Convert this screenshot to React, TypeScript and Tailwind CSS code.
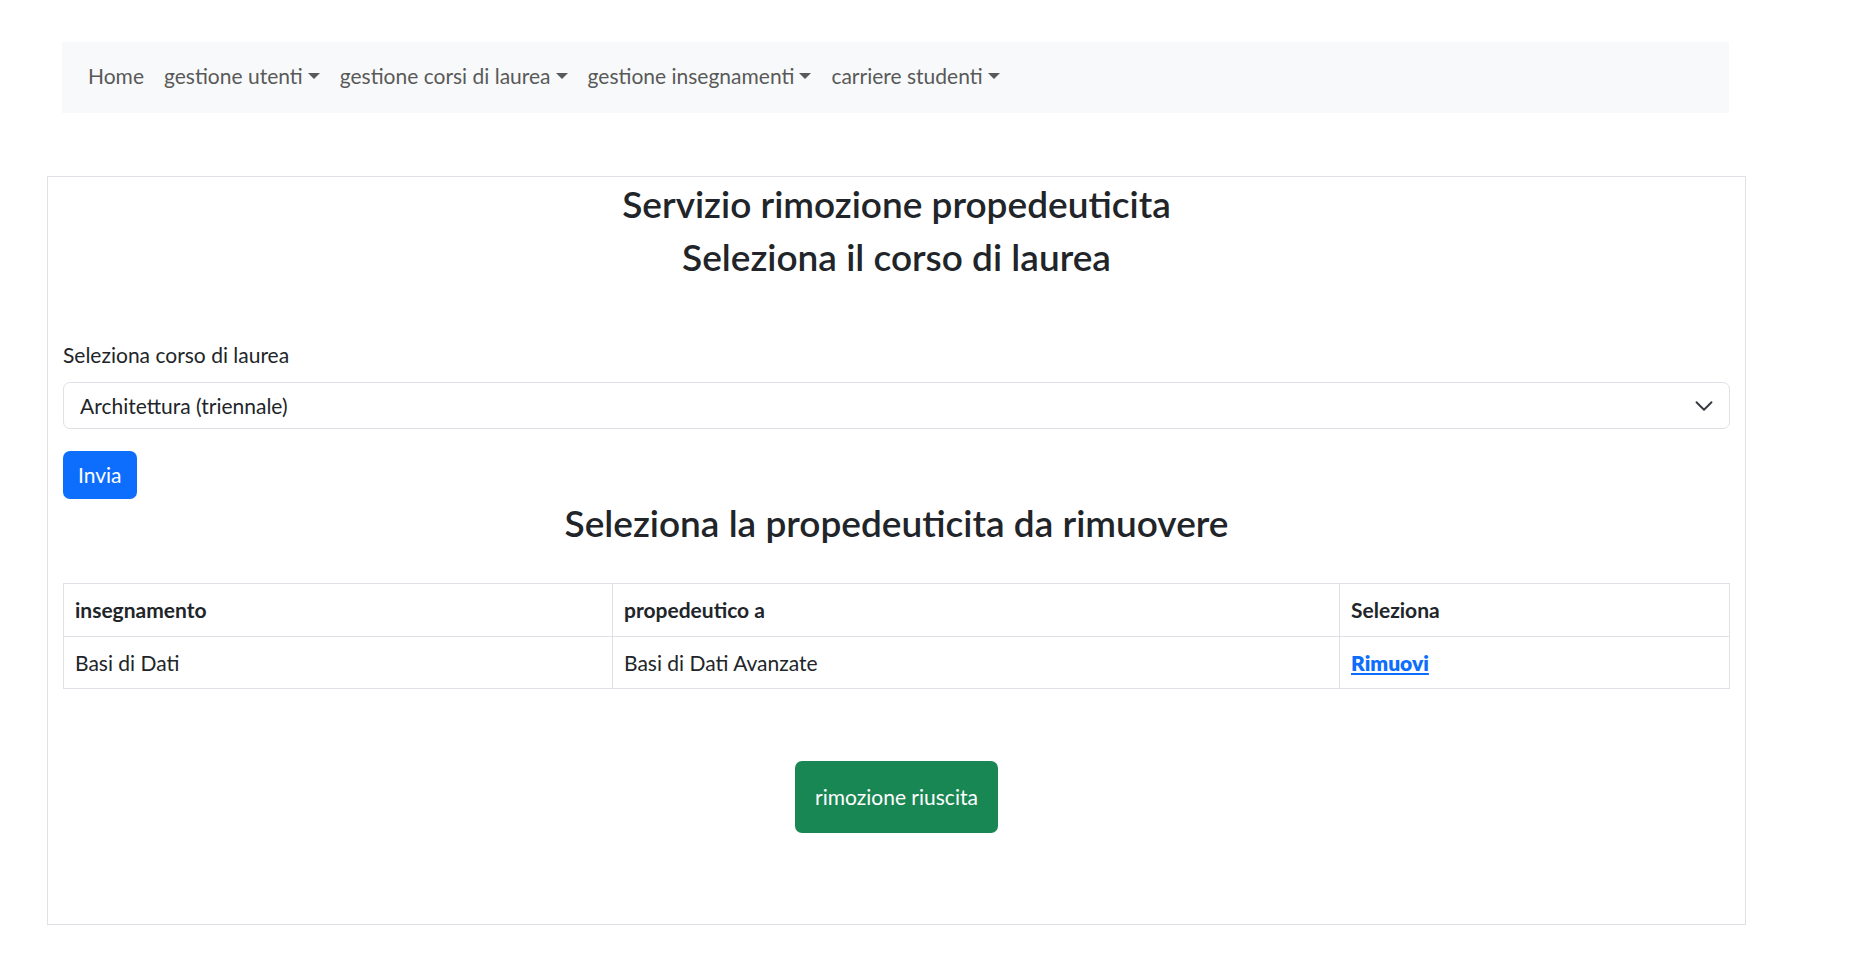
import React from 'react';

const menus = ['gestione utenti', 'gestione corsi di laurea', 'gestione insegnamenti', 'carriere studenti'];

const Caret = () => (
  <span className="ml-[5px] inline-block h-0 w-0 border-x-[6px] border-t-[6px] border-b-0 border-x-transparent border-t-current align-[4px]" />
);

const App: React.FC = () => {
  return (
    <div className="min-h-[954px] bg-white pt-[42px] font-['Lato','Liberation_Sans',sans-serif] text-[21px] text-[#212529]">
      {/* navbar */}
      <nav className="ml-[62px] flex h-[71px] w-[1667px] items-center bg-[#f8f9fa] px-[16px] pb-[3px]">
        <a className="px-[10px] text-[#595959]">Home</a>
        {menus.map((m) => (
          <a key={m} className="flex items-center px-[10px] text-[#595959]">
            {m}
            <Caret />
          </a>
        ))}
      </nav>

      {/* card */}
      <div className="mt-[63px] ml-[47px] w-[1699px] border border-[#dee2e6] px-[15px] pt-[3px] pb-[91px]">
        <h2 className="text-center text-[37px] leading-[48px] font-semibold">Servizio rimozione propedeuticita</h2>
        <h2 className="mt-[5px] text-center text-[37px] leading-[48px] font-semibold">Seleziona il corso di laurea</h2>

        <label className="mt-[59px] block leading-[30px]">Seleziona corso di laurea</label>
        <div className="mt-[12px] flex h-[47px] items-center justify-between rounded-[7px] border border-[#dee2e6] pr-[15px] pl-[16px]">
          <span>Architettura (triennale)</span>
          <svg width="20" height="20" viewBox="0 0 16 16" fill="none">
            <path d="m2 5 6 6 6-6" stroke="#343a40" strokeWidth="1.5" strokeLinecap="round" strokeLinejoin="round" />
          </svg>
        </div>

        <button className="mt-[22px] flex h-[48px] items-center rounded-[7px] bg-[#0d6efd] px-[15px] text-white">Invia</button>

        <h3 className="text-center text-[37px] leading-[48px] font-semibold">Seleziona la propedeuticita da rimuovere</h3>

        <table className="mt-[36px] w-full table-fixed border-collapse">
          <colgroup>
            <col className="w-[549px]" />
            <col className="w-[727px]" />
            <col />
          </colgroup>
          <thead>
            <tr className="h-[53px]">
              <th className="border border-[#dee2e6] px-[11px] text-left font-bold">insegnamento</th>
              <th className="border border-[#dee2e6] px-[11px] text-left font-bold">propedeutico a</th>
              <th className="border border-[#dee2e6] px-[11px] text-left font-bold">Seleziona</th>
            </tr>
          </thead>
          <tbody>
            <tr className="h-[52px]">
              <td className="border border-[#dee2e6] px-[11px]">Basi di Dati</td>
              <td className="border border-[#dee2e6] px-[11px]">Basi di Dati Avanzate</td>
              <td className="border border-[#dee2e6] px-[11px]">
                <a className="font-extrabold text-[#0d6efd] underline">Rimuovi</a>
              </td>
            </tr>
          </tbody>
        </table>

        <div className="mt-[72px] flex justify-center">
          <button className="flex h-[72px] w-[203px] items-center justify-center rounded-[7px] bg-[#198754] text-white">
            rimozione riuscita
          </button>
        </div>
      </div>
    </div>
  );
};

export default App;
